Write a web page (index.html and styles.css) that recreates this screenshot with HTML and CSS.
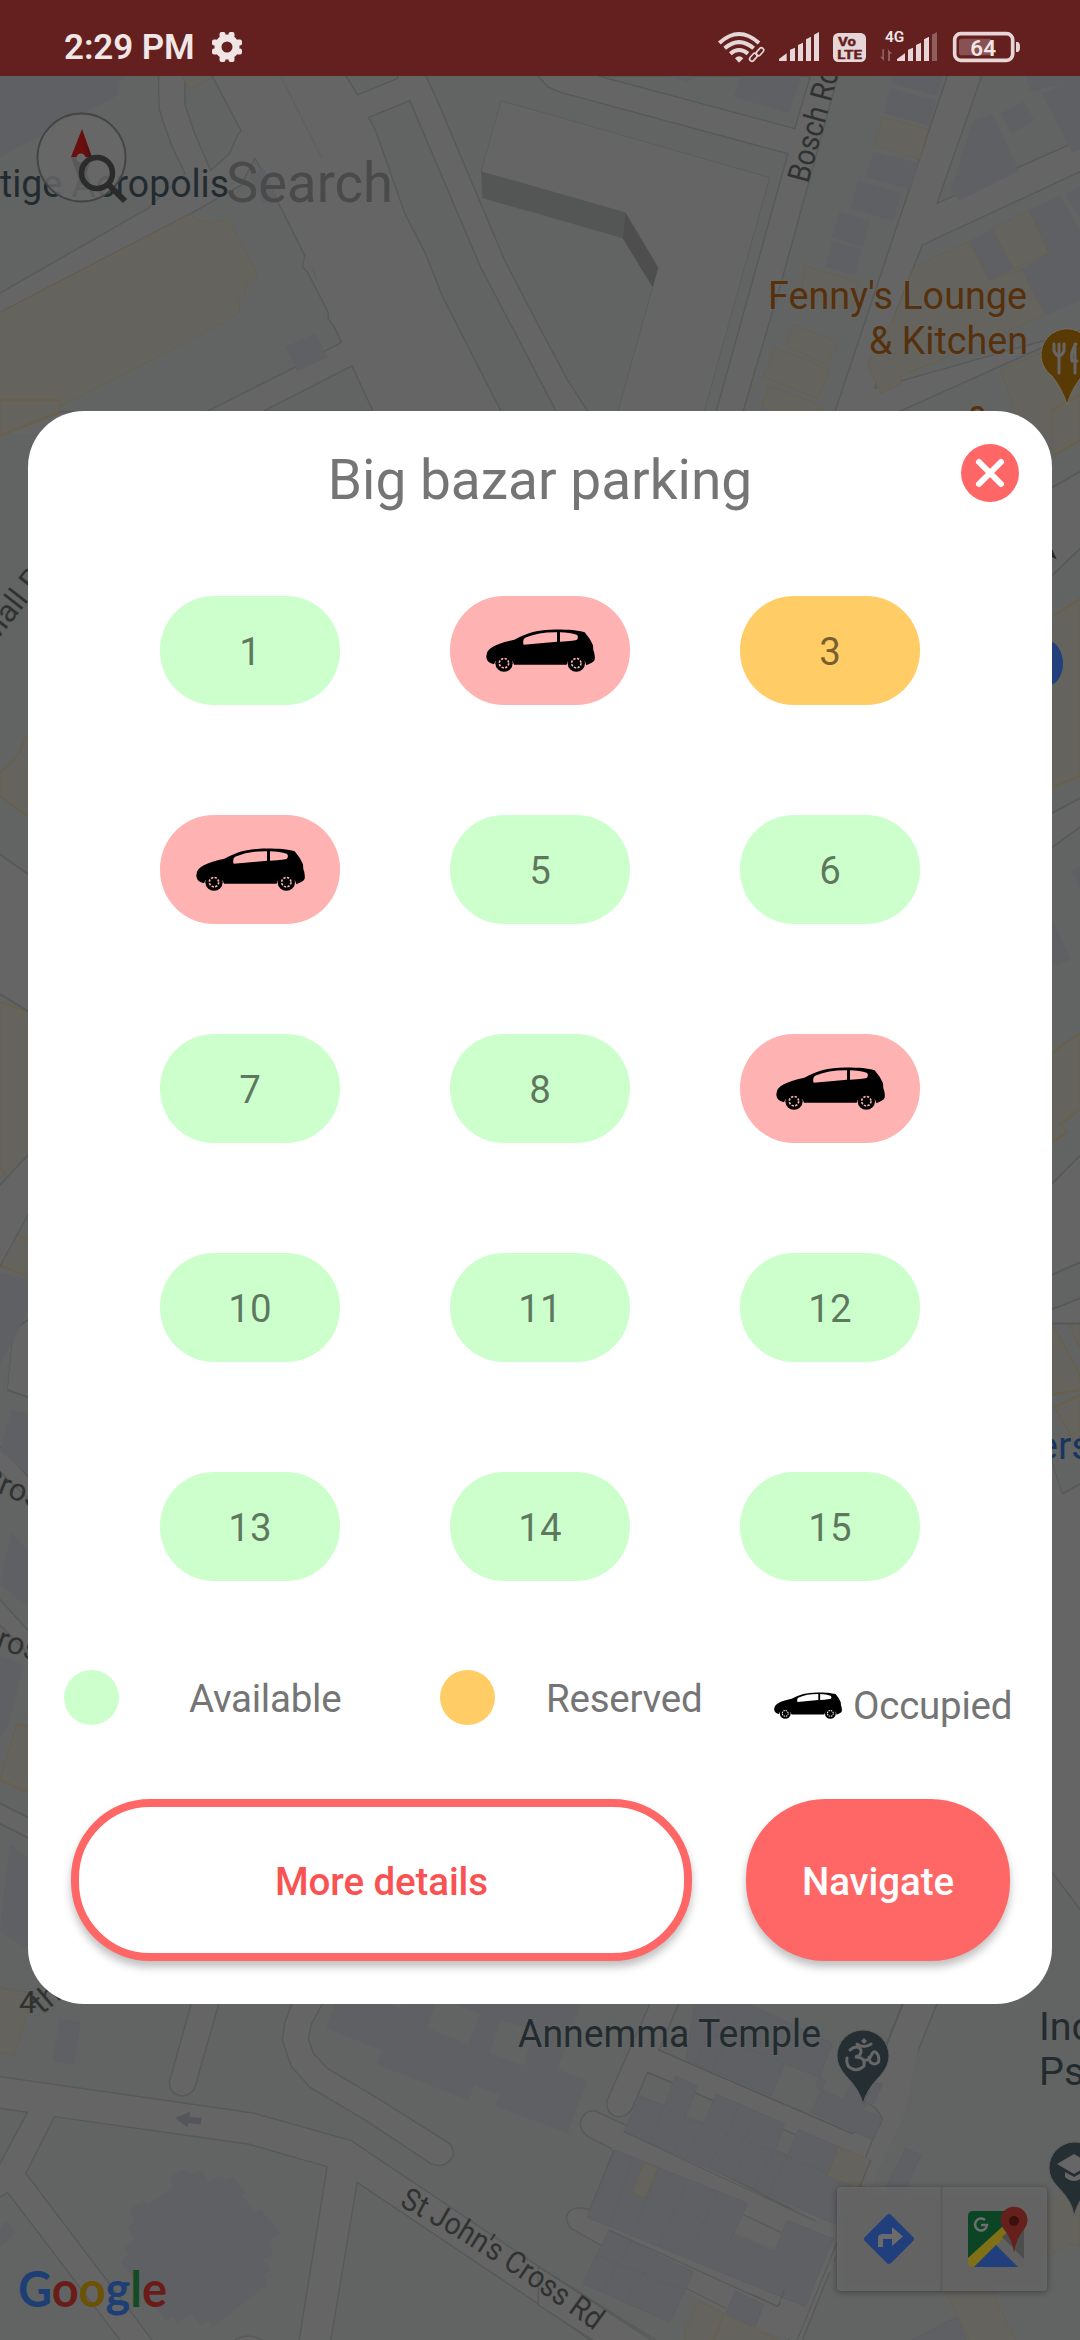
FILE: index.html
```html
<!DOCTYPE html>
<html lang="en">
<head>
<meta charset="utf-8">
<title>Big bazar parking</title>
<link rel="stylesheet" href="styles.css">
</head>
<body>
<svg class="map" viewBox="0 0 1080 2340" aria-hidden="true">
  <defs>
    <path id="st-johns" d="M399 2206 Q490 2252 620 2350"/>
    <linearGradient id="needle"><stop offset=".5" stop-color="#6a0f0f"/><stop offset="1" stop-color="#521010"/></linearGradient>
  </defs>
  <rect class="land" width="1080" height="2340"/>

  <!-- north-west streets -->
  <g transform="scale(.34439 .33333)">
    <rect class="road" x="0" y="200" width="3140" height="1100"/>
    <g class="land edge">
      <path d="M-5 220H460L462 325 475 370 500 440 537 520 430 625-5 882Z"/>
      <path d="M537 220H612L700 392 690 405 667 460 612 512 565 400 537 315Z"/>
      <path d="M555 640 700 555 740 475 765 520 885 767 878 800 895 820 953 937V955L970 980 992 1027 860 1100 600 1235H-5V940Z"/>
      <path d="M765 1233 1022 1098 1083 1233ZM1000 220 1038 285 1155 235V220Z"/>
      <path d="M1070 352 1190 302 1395 800 1618 1240H1458L1285 890 1235 760 1175 640 1090 390Z"/>
      <path d="M1233 220 1265 290 1465 780 1568 985 1648 1140 1710 1240H2078L2288 461 1628 277 1593 262 1568 235 1560 220Z"/>
      <path d="M1738 228H2353L2308 386Z"/>
      <path d="M2435 220H2753L2423 1240H2156L2273 830Z"/>
      <path d="M2853 220H3140V418L2721 610Z"/>
      <path d="M2678 735 3140 513V990L2540 1165 2600 940Z"/>
      <path d="M2610 1235 3140 990V1260H2610Z"/>
    </g>
    <path class="bldg" d="M0 228H358L345 245 343 280 320 300 240 340 0 470ZM725 530 765 505 803 585 765 610ZM830 1040 917 1000 950 1072 863 1114Z"/>
    <path class="shop" d="M-5 940 555 640Q570 670 595 664 628 672 661 655L748 825Q745 838 720 850 708 865 710 890L695 905V935L655 965 100 1260H-5ZM528 228 550 268 615 232"/>
    <path class="road edge thin" d="M1455 303 1568 335 2235 533 2043 1240H1793L1895 862 1911 803 1816 638 1568 565 1397 515Z"/>
    <path fill="#535655" d="M1397 515 1568 565 1816 638 1808 715 1568 643 1401 595Z"/>
    <path fill="#4e4e4e" d="M1816 638 1911 803 1895 862 1808 715Z"/>
    <path class="faint" d="M815 228 935 475M908 803 920 840"/>
    <g transform="translate(1568 0)">
      <path class="bldg" d="M370 228H440L432 248ZM585 228H757L723 340 563 290ZM1025 228H1170L1150 287 1022 250ZM1018 265 1150 302 1128 377 998 340ZM968 456 1098 490 1078 568 945 530ZM924 543 1047 578 1027 662 902 626ZM869 636 958 662 936 742 847 712ZM850 723 935 748 913 826 827 800ZM1258 362 1314 342 1390 512 1217 602 1193 570ZM1338 340 1405 306 1434 360 1370 401ZM1412 228H1568V240L1425 273ZM1458 282 1568 230V450L1545 457ZM1245 725 1315 687 1375 808 1305 842ZM1418 632 1510 586 1568 690V900L1470 946 1398 808 1478 758ZM1525 582 1568 562V650ZM1130 940 1245 925 1270 980 1190 1010Z"/>
      <path class="shop" d="M993 352 1127 388 1104 477 972 437ZM770 798 926 846 905 930 755 890ZM740 973 864 1028 836 1093 712 1038ZM682 1043 842 1109 806 1196 648 1130ZM665 1158 818 1217 806 1250H635ZM1085 804 1150 770 1245 725 1305 842 1398 808 1466 946 1045 1130 1050 1150 990 1180 953 1100 960 1070 1020 970ZM1315 687 1418 632 1478 758 1375 808ZM1338 1110 1568 1010V1300H1400Z"/>
    </g>
  </g>

  <!-- streets along both sides of the dialog -->
  <g transform="translate(0 400) scale(.3333 1.0204)">
    <path class="shop" d="M0 0H180V12L0 35ZM0 365Q60 350 70 335L90 325V410L0 388ZM0 590 90 600V740L35 768 0 752ZM0 848 45 817 90 825V860ZM0 1352 50 1298 90 1300V1366Z"/>
    <path class="road edge thin" d="M-2 445 90 466V600L-2 582ZM-2 770 90 738V795L-2 850ZM40 912 90 900V978L22 970ZM-2 1025 90 1057V1078L-2 1050ZM-2 1175 90 1208V1230L-2 1200ZM-2 1375 90 1390V1410L-2 1395Z"/>
    <path class="bldg" d="M0 855 90 862V890L0 945ZM35 990 90 994V1055L0 1030ZM35 1110 90 1130V1185L0 1160ZM0 1230 70 1240 25 1298 0 1310ZM30 1415 90 1430V1520L0 1500Z"/>
  </g>
  <g transform="translate(1020 400) scale(.3333 1.0204)">
    <path class="shop" d="M96 10 180 -5V40L96 55ZM96 212 180 195V368L96 380ZM96 640 180 620V695L120 710 142 717 96 728ZM96 905 180 955V970L96 975ZM150 907 180 903V930ZM103 987 180 975V1030Z"/>
    <path class="road edge thin" d="M90 87 182 70V145L90 174ZM90 406 182 390V418L90 440ZM90 770 182 740V845L90 858ZM90 892 182 880V905L90 905ZM90 1035 127 1072 182 1062V1480L90 1440Z"/>
    <path class="bldg" d="M96 510 153 548 96 556ZM155 462 180 458V480Z"/>
    <ellipse cx="82" cy="258" rx="47" ry="22" fill="#22407b"/>
    <path fill="#22292c" d="M96 146 110 156 96 154Z"/>
  </g>

  <!-- southern streets -->
  <g transform="translate(0 1980) scale(.34439 .33333)">
    <path class="shop" d="M-5 22 90 55 70 130 40 228-5 215Z"/>
    <path class="faint" d="M0 22 120 45Q180 60 150 95L95 108"/>
    <path class="road edge" d="M-5 289 735 399 1020 482 1568 862 1910 1085H1720L1568 975 1037 607 960 1085H868L950 560 720 492 158 410 75 580 445 1085H352L22 637-5 655V560L80 397-5 384Z"/>
    <path class="road edge" d="M557 65 492 305Q492 342 528 348 560 345 567 318L637 65ZM850 65 828 125 820 180 845 258 900 322 1060 420 1250 550Q1290 570 1315 530 1320 500 1300 487L1105 360 950 265 910 220 895 175 905 130 940 65ZM675 1085Q720 1052 768 1085"/>
    <path class="bldg" d="M172 117 234 126 216 254 154 244ZM975 65H1690L1620 268 1706 302 1648 460 1438 378 1451 345 1378 314 1360 360 1094 253 1110 210 947 145ZM0 745 17 722 47 760 0 800ZM495 590 532 568 554 583 585 572 605 603 644 586 656 602 673 589 718 640 702 648 742 695 756 687 813 758 782 785 793 822 763 839 789 870 765 883 777 913 617 1041 606 1019 583 1036 555 998 514 1034 504 1008 481 1020 350 845 373 822 360 803 391 775 373 744 390 718 375 690 415 662 430 673 502 623Z"/>
    <path class="land" d="M1265 70H1320L1394 102 1361 193 1239 144ZM1455 120 1550 150 1520 257 1421 219ZM1125 70H1170L1160 84Z"/>
    <path fill="#54565b" d="M509 414 552 395 549 411 585 414 583 433 547 430 544 442Z"/>
    <g transform="translate(1568 0)">
      <path class="road edge" d="M1055 65 940 360 975 385 995 415 965 480 905 640 720 1085H760L1155 65ZM322 65 195 360Q190 405 230 411 260 405 270 380L312 277 383 308 502 362 710 450 960 560 1010 430 905 460 345 210 405 65ZM117 430Q125 390 160 393L250 436 800 723 860 735 830 800 690 980 540 905 175 795 90 745Q65 710 90 690 110 677 145 690L215 510 140 470Q117 455 117 430ZM-5 860 330 1085H160L-5 975Z"/>
      <path class="road" d="M205 507 870 735 850 870 700 970 420 880 200 750 130 700 590 890 690 930 700 960 800 730 250 470ZM690 450 960 540 900 650 740 470ZM690 980 860 830 960 620 1060 400 1100 200 970 480 740 1080 620 1050 420 930 440 870Z"/>
      <path class="bldg seam" d="M450 65H590L850 190 800 320 880 360 905 310 995 310 970 370 930 385 995 415 965 480 788 397 830 300 710 250 672 348 425 240ZM393 288 458 318 420 415 475 430 512 343 710 430 683 510 720 525 750 448 868 500 833 588 960 625V635L855 733 788 700 243 455 290 350 362 377ZM218 510 603 670 562 765 680 815 718 721 852 776 770 980 137 712ZM198 752 446 874 377 1027 125 910ZM567 933 650 973 625 1040 538 1005ZM1062 505 1106 525 1050 655 1000 630ZM1070 1085 1210 1010 1240 1085Z"/>
      <path class="seam" d="M590 65 500 270M530 70 450 250M710 250 490 160M580 375 540 470M630 395 583 500M440 415 385 520M362 377 315 487M475 430 420 540M545 460 490 560M610 490 560 595M683 510 625 620M290 350 860 590M780 460 720 525 660 650M190 605 780 850M270 540 205 730M345 565 265 770M430 598 345 800M515 635 430 830M562 765 500 860M640 790 570 895M160 825 420 930M265 780 180 940M340 820 250 960"/>
      <path class="shop" d="M868 500 962 542 930 625 833 588ZM302 545 343 563 305 654 268 637ZM460 964 535 1000 505 1085H422V1050ZM535 1000 620 1042 690 1080 600 1085H500ZM1135 845 1510 648 1568 625V800L1543 790 1303 915 1382 1085H1250Z"/>
      <path class="faint dark" d="M345 210 905 460M960 540 745 1085M1055 72 940 370M243 455 800 723M312 277 383 308M452 340 502 362M590 703 700 758M200 750 690 980 710 930M425 925 540 985"/>
    </g>
  </g>

  <!-- place and street labels -->
  <g class="place">
    <text x="0" y="197" textLength="229" lengthAdjust="spacingAndGlyphs">tige Acropolis</text>
    <text x="518" y="2047" textLength="303" lengthAdjust="spacingAndGlyphs">Annemma Temple</text>
    <text x="1039" y="2040">Ind</text>
    <text x="1039" y="2085">Ps</text>
  </g>
  <g class="place food">
    <text x="768" y="309" textLength="259" lengthAdjust="spacingAndGlyphs">Fenny's Lounge</text>
    <text x="869" y="354" textLength="159" lengthAdjust="spacingAndGlyphs">&amp; Kitchen</text>
    <text x="966" y="434">&amp;</text>
  </g>
  <text class="place transit" x="1037" y="1459">ers</text>
  <g class="street">
    <text transform="translate(808 184) rotate(-74.5)" textLength="117" lengthAdjust="spacingAndGlyphs">Bosch Rd</text>
    <text transform="translate(-7 646) rotate(-52)">Mall Rd</text>
    <text transform="translate(-22 1485) rotate(22)">Cross</text>
    <text transform="translate(-24 1640) rotate(20)">Cross</text>
    <text x="19" y="2013">4</text><text transform="translate(42 2015) rotate(-40)">th</text>
    <text><textPath href="#st-johns" textLength="232" lengthAdjust="spacingAndGlyphs">St John's Cross Rd</textPath></text>
  </g>

  <!-- place pins -->
  <g stroke="#5b5e5c" stroke-width="1">
    <path fill="#593a05" stroke="#74705f" d="M1067 405Q1063 390 1052 376A26 26 0 1 1 1082 376Q1071 390 1067 405Z"/>
    <path fill="#242e33" d="M863 2104Q860 2090 846 2076 837 2066 837 2056A26 26 0 0 1 889 2056Q889 2066 880 2076 866 2090 863 2104Z"/>
    <path fill="#242e33" d="M1074 2216Q1073 2202 1058 2187 1049 2178 1049 2168A26 26 0 0 1 1101 2168Q1101 2178 1090 2187 1077 2202 1074 2216Z"/>
  </g>
  <g fill="none" stroke="#666" stroke-width="3" stroke-linecap="round">
    <path d="M1054 344V351Q1059 361 1064 351V344M1059 344V373M1075 344V373M1076 344Q1070 352 1072 361H1077"/>
    <path d="M850 2050Q857 2044 861 2050 862 2056 855 2057 866 2057 864 2066 857 2073 849 2067 846 2063 847 2058M864 2060Q869 2061 871 2056 874 2048 878 2055 881 2064 874 2064 869 2063 869 2057M857 2044Q864 2049 871 2044"/>
    <path fill="#666" stroke="none" d="M864 2038 867 2041 864 2044 861 2041ZM1057 2164 1074 2154 1091 2164 1074 2174ZM1065 2172 1074 2177 1083 2172V2177Q1074 2185 1065 2177Z"/>
  </g>

  <!-- compass with the search field's icon over it -->
  <circle cx="81.500" cy="157.500" r="44" fill="#676767" fill-opacity=".83" stroke="#434444" stroke-width="1.800"/>
  <path fill="#57595a" d="M71 157H92L81.500 187Z"/>
  <path fill="url(#needle)" d="M82 129 92 157H71Z"/>
  <circle cx="81" cy="158" r="4.500" fill="#686868"/>
  <circle cx="97" cy="173" r="15.500" fill="none" stroke="#2b2b2b" stroke-width="5.500"/>
  <path stroke="#2b2b2b" stroke-width="6" d="M109 185 125 201"/>
  <text class="search" x="226" y="201.500" textLength="167" lengthAdjust="spacingAndGlyphs">Search</text>

  <!-- map toolbar -->
  <rect class="tool" x="837" y="2187" width="210" height="104" rx="4"/>
  <path stroke="#5a5b5b" stroke-width="2" d="M941.500 2187V2291"/>
  <rect x="870.500" y="2220.500" width="37" height="37" rx="3" transform="rotate(45 889 2239)" fill="#213f7d"/>
  <path fill="#6b6b6b" d="M878 2247V2238Q878 2234 883 2234H892V2227L903 2236.500 892 2246V2239H883V2247Z"/>
  <rect x="968" y="2211" width="56" height="56" rx="5" fill="#616161"/>
  <path fill="#0c4526" d="M973 2211H1019L968 2262V2216Q968 2211 973 2211Z"/>
  <path fill="#7f7017" d="M968 2258 1003 2226 1009 2233 974 2267H972Q968 2266 968 2262Z"/>
  <path fill="#213f7d" d="M974 2267 996 2245 1018 2267Z"/>
  <path fill="#4d4d4d" d="M1002 2237 1024 2217V2259Z"/>
  <path fill="none" stroke="#6e6e6e" stroke-width="2.500" d="M985 2220A6 6 0 1 0 987 2225H981"/>
  <path fill="#66201b" d="M1014 2253Q1013 2240 1003 2228A13.500 13.500 0 1 1 1025 2228Q1015 2240 1014 2253Z"/>
  <circle cx="1014" cy="2221" r="5" fill="#3a0f0d"/>

  <text class="logo" x="18" y="2307" textLength="149" lengthAdjust="spacingAndGlyphs"><tspan fill="#1d3f75">G</tspan><tspan fill="#6a1d18">o</tspan><tspan fill="#6c5205">o</tspan><tspan fill="#1d3f75">g</tspan><tspan fill="#154b24">l</tspan><tspan fill="#6a1d18">e</tspan></text>
</svg>

<div class="screen">
  <header class="status">
    <span class="time">2:29 PM</span>
    <svg class="gear" viewBox="0 0 30 30"><circle cx="15" cy="15" r="9" fill="none" stroke="#f1e6e6" stroke-width="7"/><g fill="#f1e6e6"><rect x="7.500" y="0" width="6" height="6" rx="2"/><rect x="16.500" y="0" width="6" height="6" rx="2"/><rect x="7.500" y="24" width="6" height="6" rx="2"/><rect x="16.500" y="24" width="6" height="6" rx="2"/><rect x="0" y="7.500" width="6" height="6" rx="2"/><rect x="0" y="16.500" width="6" height="6" rx="2"/><rect x="24" y="7.500" width="6" height="6" rx="2"/><rect x="24" y="16.500" width="6" height="6" rx="2"/></g></svg>
    <svg class="signals" viewBox="0 0 1020 228">
      <g fill="none" stroke="#e6d6d7" stroke-width="12"><path d="M58 129Q117 75 177 129M74 145Q117 108 161 145M91 161Q117 139 144 161"/></g>
      <path fill="#e6d6d7" d="M105 175Q117 163 130 175L117 188Z"/>
      <g fill="none" stroke="#641f1f" stroke-width="14"><rect x="152" y="156" width="38" height="15" rx="7.500" transform="rotate(-48 171 164)"/></g>
      <g fill="none" stroke="#e6d6d7" stroke-width="5"><rect x="147" y="165" width="27" height="14" rx="7" transform="rotate(-48 160 172)"/><rect x="166" y="148" width="27" height="14" rx="7" transform="rotate(-48 180 155)"/></g>
      <path fill="#e6d6d7" d="M237 183V177L260 160V183ZM270 183V149L285 143V183ZM294 183V135L309 128V183ZM318 183V118L333 110V183ZM342 183V104L357 96V183ZM591 183V177L615 160V183ZM624 183V149L639 143V183ZM648 183V135L663 128V183ZM672 183V118L687 110V183Z"/>
      <path fill="#915e5e" d="M696 183V104L711 96V183ZM552 148V183L540 170H547V148ZM564 183V148L577 161H570V183Z"/>
      <rect x="399" y="99" width="99" height="87" rx="16" fill="#e6d6d7"/>
      <g class="volte"><text x="414" y="137" font-size="38" textLength="54" lengthAdjust="spacingAndGlyphs">Vo</text><text x="412" y="177" font-size="40" textLength="74" lengthAdjust="spacingAndGlyphs">LTE</text></g>
      <text class="label" x="555" y="125" font-size="45" textLength="58" lengthAdjust="spacingAndGlyphs">4G</text>
      <rect x="764" y="101" width="174" height="80" rx="18" fill="none" stroke="#e6d6d7" stroke-width="11"/>
      <rect x="777" y="116" width="98" height="50" rx="8" fill="#8a5152"/>
      <path fill="#e6d6d7" d="M948 126H953Q960 128 960 141T953 156H948Z"/>
      <text class="label" x="811" y="167" font-size="66" textLength="77" lengthAdjust="spacingAndGlyphs">64</text>
    </svg>
  </header>

  <main class="dialog">
    <div class="heading">
      <h1>Big bazar parking</h1>
      <svg class="close" viewBox="0 0 58 58"><circle cx="29" cy="29" r="29" fill="#f66"/><path stroke="#fff" stroke-width="6" stroke-linecap="round" d="M18 18 40 40M40 18 18 40"/></svg>
    </div>

    <svg width="0" height="0" class="defs"><symbol id="car" viewBox="0 0 327 128">
      <path fill-rule="evenodd" d="M1 84Q0 63 22 52 42 41 85 32C125 10 152 2 210 1 250 1 274 3 296 9Q312 27 321 48L322 63Q328 75 326 92 323 101 301 108A30 30 0 0 0 242 107H84A31 31 0 0 0 24 105Q3 101 1 84ZM113 47Q108 30 119 25 160 8 213 9V38ZM222 9Q252 9 272 17 279 22 273 32 269 35 222 38Z"/>
      <circle cx="54" cy="102" r="26"/><circle cx="271" cy="102" r="26"/>
      <g class="hub"><circle cx="54" cy="102" r="14"/><circle cx="271" cy="102" r="14"/></g>
    </symbol></svg>

    <section class="slots">
      <div class="slot">1</div>
      <div class="slot taken"><svg><use href="#car"/></svg></div>
      <div class="slot held">3</div>
      <div class="slot taken"><svg><use href="#car"/></svg></div>
      <div class="slot">5</div>
      <div class="slot">6</div>
      <div class="slot">7</div>
      <div class="slot">8</div>
      <div class="slot taken"><svg><use href="#car"/></svg></div>
      <div class="slot">10</div>
      <div class="slot">11</div>
      <div class="slot">12</div>
      <div class="slot">13</div>
      <div class="slot">14</div>
      <div class="slot">15</div>
    </section>

    <section class="legend">
      <i class="dot"></i><span class="available">Available</span>
      <i class="dot held"></i><span class="reserved">Reserved</span>
      <svg class="mini-car"><use href="#car"/></svg><span class="occupied">Occupied</span>
    </section>

    <footer class="actions">
      <button class="details">More details</button>
      <button class="navigate">Navigate</button>
    </footer>
  </main>
</div>
</body>
</html>
```
FILE: styles.css
```css
* { box-sizing: border-box; }

body {
  margin: 0;
  width: 1080px;
  height: 2340px;
  overflow: hidden;
  position: relative;
  background: #616462;
  font-family: Roboto, "Liberation Sans", sans-serif;
}

/* Map */
.map {
  position: absolute;
  left: 0;
  top: 0;
  width: 1080px;
  height: 2340px;
}
.land { fill: #616462; }
.road { fill: #656565; }
.bldg { fill: #5f6063; }
.shop { fill: #65635e; stroke: #6a5f48; stroke-width: 2; }
.edge { stroke: #575959; stroke-width: 4; }
.thin { stroke-width: 2; }
.seam { stroke: #5b5d60; stroke-width: 2; }
path.seam:not(.bldg), .faint { fill: none; }
.faint { stroke: #5e6060; stroke-width: 3; }
.dark { stroke: #565857; }
.place {
  font-size: 39.5px;
  fill: #222b30;
  stroke: #646665;
  stroke-width: 3;
  stroke-opacity: .6;
  paint-order: stroke;
}
.food { fill: #57300c; }
.transit { fill: #1a3560; }
.street {
  font-size: 31px;
  fill: #303231;
}
.search { font-size: 55px; fill: #4a4a4a; }
.tool { fill: #676767; fill-opacity: .9; filter: drop-shadow(0 1px 3px rgba(0, 0, 0, .4)); }
.logo { font-family: Lato, sans-serif; font-weight: 700; font-size: 49px; }

/* Foreground */
.screen {
  position: relative;
  display: flex;
  flex-direction: column;
  gap: 335px;
}
.status {
  height: 76px;
  background: #641f1f;
  display: flex;
  align-items: flex-start;
  padding-left: 64px;
}
.time {
  width: 148px;
  padding-top: 27px;
  font-size: 35px;
  line-height: 41px;
  font-weight: 600;
  letter-spacing: -.1px;
  color: #f1e6e6;
  white-space: nowrap;
}
.gear { width: 30px; height: 30px; margin-top: 32px; }
.signals { width: 340px; height: 76px; margin-left: 458px; }
.volte { font-weight: 800; fill: #641f1f; stroke: #641f1f; stroke-width: 1; }
.label { font-weight: 600; fill: #f1e6e6; }

.dialog {
  width: 1024px;
  height: 1593px;
  margin-left: 28px;
  background: #fff;
  border-radius: 56px;
  display: flex;
  flex-direction: column;
  color: #757575;
  font-size: 38.5px;
}
.heading {
  height: 185px;
  display: grid;
  grid-template-columns: 1fr auto 1fr;
  align-items: start;
  padding: 33px 33px 0;
}
h1 {
  grid-column: 2;
  margin: 3px 0 0;
  font-size: 55px;
  line-height: 66px;
  font-weight: 400;
}
.close { width: 58px; height: 58px; justify-self: end; }
.defs { position: absolute; }

.slots {
  display: grid;
  grid-template-columns: repeat(3, 180px);
  grid-auto-rows: 109px;
  gap: 110px;
  margin-left: 132px;
}
.slot {
  display: flex;
  align-items: center;
  justify-content: center;
  border-radius: 54px;
  background: #cfc;
  color: rgba(0, 0, 0, .54);
  padding-top: 2px;
}
.slot.held, .dot.held { background: #fc6; }
.slot.taken { background: #ffb2b2; --hub: #ffb2b2; }
.slot.taken svg { width: 109px; height: 43px; margin-bottom: 2px; }
.hub { fill: none; stroke: var(--hub, #fff); stroke-width: 5; stroke-dasharray: 7 4; }

.legend {
  display: flex;
  align-items: flex-start;
  height: 70px;
  margin-top: 91px;
  padding-left: 36px;
  line-height: 46px;
  letter-spacing: -.25px;
}
.legend span { white-space: nowrap; }
.dot { width: 55px; height: 55px; border-radius: 50%; background: #cfc; margin-top: -2px; }
.available { width: 251px; margin: 4px 0 0 70px; }
.reserved { width: 155px; margin: 4px 0 0 51px; }
.mini-car { width: 68px; height: 27px; margin: 20px 0 0 73px; }
.occupied { margin: 11px 0 0 11px; }

.actions {
  display: flex;
  gap: 54px;
  margin: 57px 0 0 43px;
}
button {
  height: 162px;
  padding: 3px 0 0;
  border: 0;
  border-radius: 79px;
  font: 500 38.5px Roboto, "Liberation Sans", sans-serif;
  letter-spacing: -.1px;
  box-shadow: 0 6px 8px rgba(0, 0, 0, .25);
}
.details { width: 621px; background: #fff; border: 8px solid #f66; color: #f95252; }
.navigate { width: 264px; background: #f66; color: #fff; }
```
